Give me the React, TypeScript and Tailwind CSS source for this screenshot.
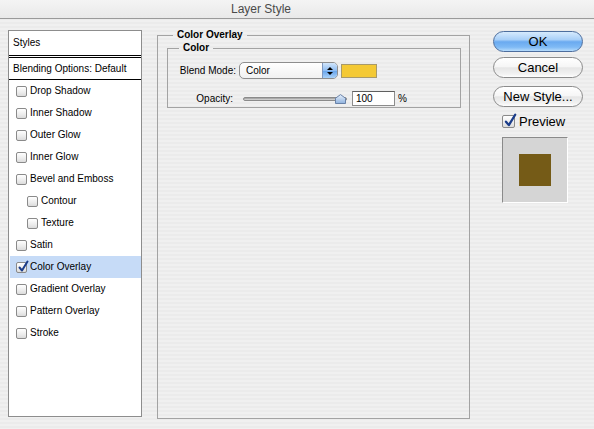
import React from "react";

const effects: { label: string; indent?: boolean; checked?: boolean }[] = [
  { label: "Drop Shadow" },
  { label: "Inner Shadow" },
  { label: "Outer Glow" },
  { label: "Inner Glow" },
  { label: "Bevel and Emboss" },
  { label: "Contour", indent: true },
  { label: "Texture", indent: true },
  { label: "Satin" },
  { label: "Color Overlay", checked: true },
  { label: "Gradient Overlay" },
  { label: "Pattern Overlay" },
  { label: "Stroke" },
];

function Check({ size }: { size: number }) {
  return (
    <svg width={size + 1} height={size + 2} viewBox="0 0 12 13" className="absolute -top-[3px] left-0">
      <path d="M2.5 7.5 L5 10.5 L10.5 1.5" fill="none" stroke="#1b3d8a" strokeWidth="2" strokeLinecap="round" strokeLinejoin="round" />
    </svg>
  );
}

function Checkbox({ checked, big }: { checked?: boolean; big?: boolean }) {
  const size = big ? 13 : 11;
  return (
    <span
      className={`relative shrink-0 rounded-[2px] border border-[#8a8a8a] bg-[linear-gradient(to_bottom,#ffffff_0%,#ececec_60%,#dcdcdc_100%)] ${big ? "h-[13px] w-[13px]" : "h-[11px] w-[11px]"}`}
    >
      {checked && <Check size={size} />}
    </span>
  );
}

function AquaButton({ children, primary }: { children: React.ReactNode; primary?: boolean }) {
  return (
    <button
      className={`flex h-[21px] w-[90px] items-center justify-center rounded-full border text-[13px] leading-none text-black ${
        primary
          ? "border-[#4d6e9e] bg-[linear-gradient(to_bottom,#d6eafd_0%,#a9d0f8_40%,#6aaaf0_52%,#7fbaf5_80%,#b7dcfc_100%)]"
          : "border-[#8b8b8b] bg-[linear-gradient(to_bottom,#ffffff_0%,#f6f6f6_45%,#e6e6e6_52%,#f2f2f2_85%,#ffffff_100%)]"
      }`}
    >
      {children}
    </button>
  );
}

function SliderThumb() {
  return (
    <svg width="11" height="10" viewBox="0 0 11 10" className="absolute -top-[4px] right-0">
      <defs>
        <linearGradient id="thumb" x1="0" y1="0" x2="0" y2="1">
          <stop offset="0" stopColor="#e8f1fc" />
          <stop offset="1" stopColor="#8fb2de" />
        </linearGradient>
      </defs>
      <path d="M0.5 9.5 V4.2 L5.5 0.6 L10.5 4.2 V9.5 Z" fill="url(#thumb)" stroke="#6982a8" />
    </svg>
  );
}

export default function App() {
  return (
    <div className="h-[429px] w-[594px] overflow-hidden bg-[repeating-linear-gradient(to_bottom,#f0f0f0_0px,#f0f0f0_2px,#ebebeb_2px,#ebebeb_4px)] font-['Liberation_Sans',Arial,sans-serif] text-black">
      {/* title bar */}
      <div className="flex h-[19px] items-center border-b border-[#9a9a9a] bg-[linear-gradient(to_bottom,#f4f4f4,#e9e9e9)] pl-[231px] text-[12px] leading-none text-[#4a4a4a]">
        Layer Style
      </div>

      <div className="flex">
        {/* effect list */}
        <div className="ml-[8px] mt-[11px] flex h-[387px] w-[134px] flex-col border border-[#8d8d8d] bg-white text-[10px] leading-none">
          <div className="flex h-[24px] items-center pl-[4px]">Styles</div>
          <div className="h-[3px] border-y border-black" />
          <div className="flex h-[22px] items-center border-b border-black pl-[4px]">Blending Options: Default</div>
          {effects.map((e) => (
            <div
              key={e.label}
              className={`flex h-[22px] items-center gap-[3px] ${e.indent ? "pl-[18px]" : "pl-[7px]"} ${
                e.checked ? "ml-[1px] bg-[#c6dbf7] !pl-[6px]" : ""
              }`}
            >
              <Checkbox checked={e.checked} />
              <span>{e.label}</span>
            </div>
          ))}
        </div>

        {/* settings */}
        <fieldset className="ml-[15px] mt-[10px] h-[390px] w-[313px] border border-[#a3a3a3]">
          <legend className="ml-[15px] px-[4px] text-[10px] font-bold leading-[12px]">Color Overlay</legend>
          <fieldset className="ml-[9px] mr-[8px] mt-[1px] h-[66px] border border-[#a3a3a3]">
            <legend className="ml-[11px] px-[4px] text-[10px] font-bold leading-[12px]">Color</legend>
            <div className="mt-[8px] flex h-[17px] items-center text-[10px]">
              <span className="w-[68px] text-right">Blend Mode:</span>
              <div className="ml-[3px] flex h-[17px] w-[99px] items-center overflow-hidden rounded-[5px] border border-[#8e8e8e] bg-[linear-gradient(to_bottom,#ffffff,#f1f1f1)]">
                <span className="flex-1 pl-[6px]">Color</span>
                <span className="flex h-full w-[15px] flex-col items-center justify-center gap-[2px] border-l border-[#7d97bf] bg-[linear-gradient(to_bottom,#d2e6fb_0%,#8fbdf2_50%,#6aa6ec_55%,#a9d1f8_100%)]">
                  <span className="h-0 w-0 border-x-[3px] border-b-[3px] border-x-transparent border-b-black" />
                  <span className="h-0 w-0 border-x-[3px] border-t-[3px] border-x-transparent border-t-black" />
                </span>
              </div>
              <span className="ml-[3px] h-[14px] w-[36px] border border-[#a89a6a] bg-[#f4c934]" />
            </div>
            <div className="mt-[12px] flex h-[15px] items-center text-[10px]">
              <span className="w-[65px] text-right">Opacity:</span>
              <div className="relative ml-[10px] h-[4px] w-[104px] rounded-full border border-[#8a8a8a] bg-[linear-gradient(to_bottom,#9a9a9a,#dcdcdc)]">
                <SliderThumb />
              </div>
              <span className="ml-[5px] flex h-[15px] w-[43px] items-center border border-[#8c8c8c] border-t-[#5f5f5f] bg-white pl-[3px]">
                100
              </span>
              <span className="ml-[3px]">%</span>
            </div>
          </fieldset>
        </fieldset>

        {/* buttons and preview */}
        <div className="ml-[23px] mt-[12px] flex flex-col">
          <AquaButton primary>OK</AquaButton>
          <div className="mt-[5px]">
            <AquaButton>Cancel</AquaButton>
          </div>
          <div className="mt-[8px]">
            <AquaButton>New Style...</AquaButton>
          </div>
          <div className="ml-[9px] mt-[8px] flex items-center gap-[4px] text-[13px] leading-none">
            <Checkbox checked big />
            <span>Preview</span>
          </div>
          <div className="ml-[9px] mt-[9px] flex h-[66px] w-[66px] items-center justify-center border border-[#8a8a8a] border-b-white border-r-white bg-[#d5d5d5]">
            <div className="h-[32px] w-[32px] bg-[#755b17]" />
          </div>
        </div>
      </div>
    </div>
  );
}
